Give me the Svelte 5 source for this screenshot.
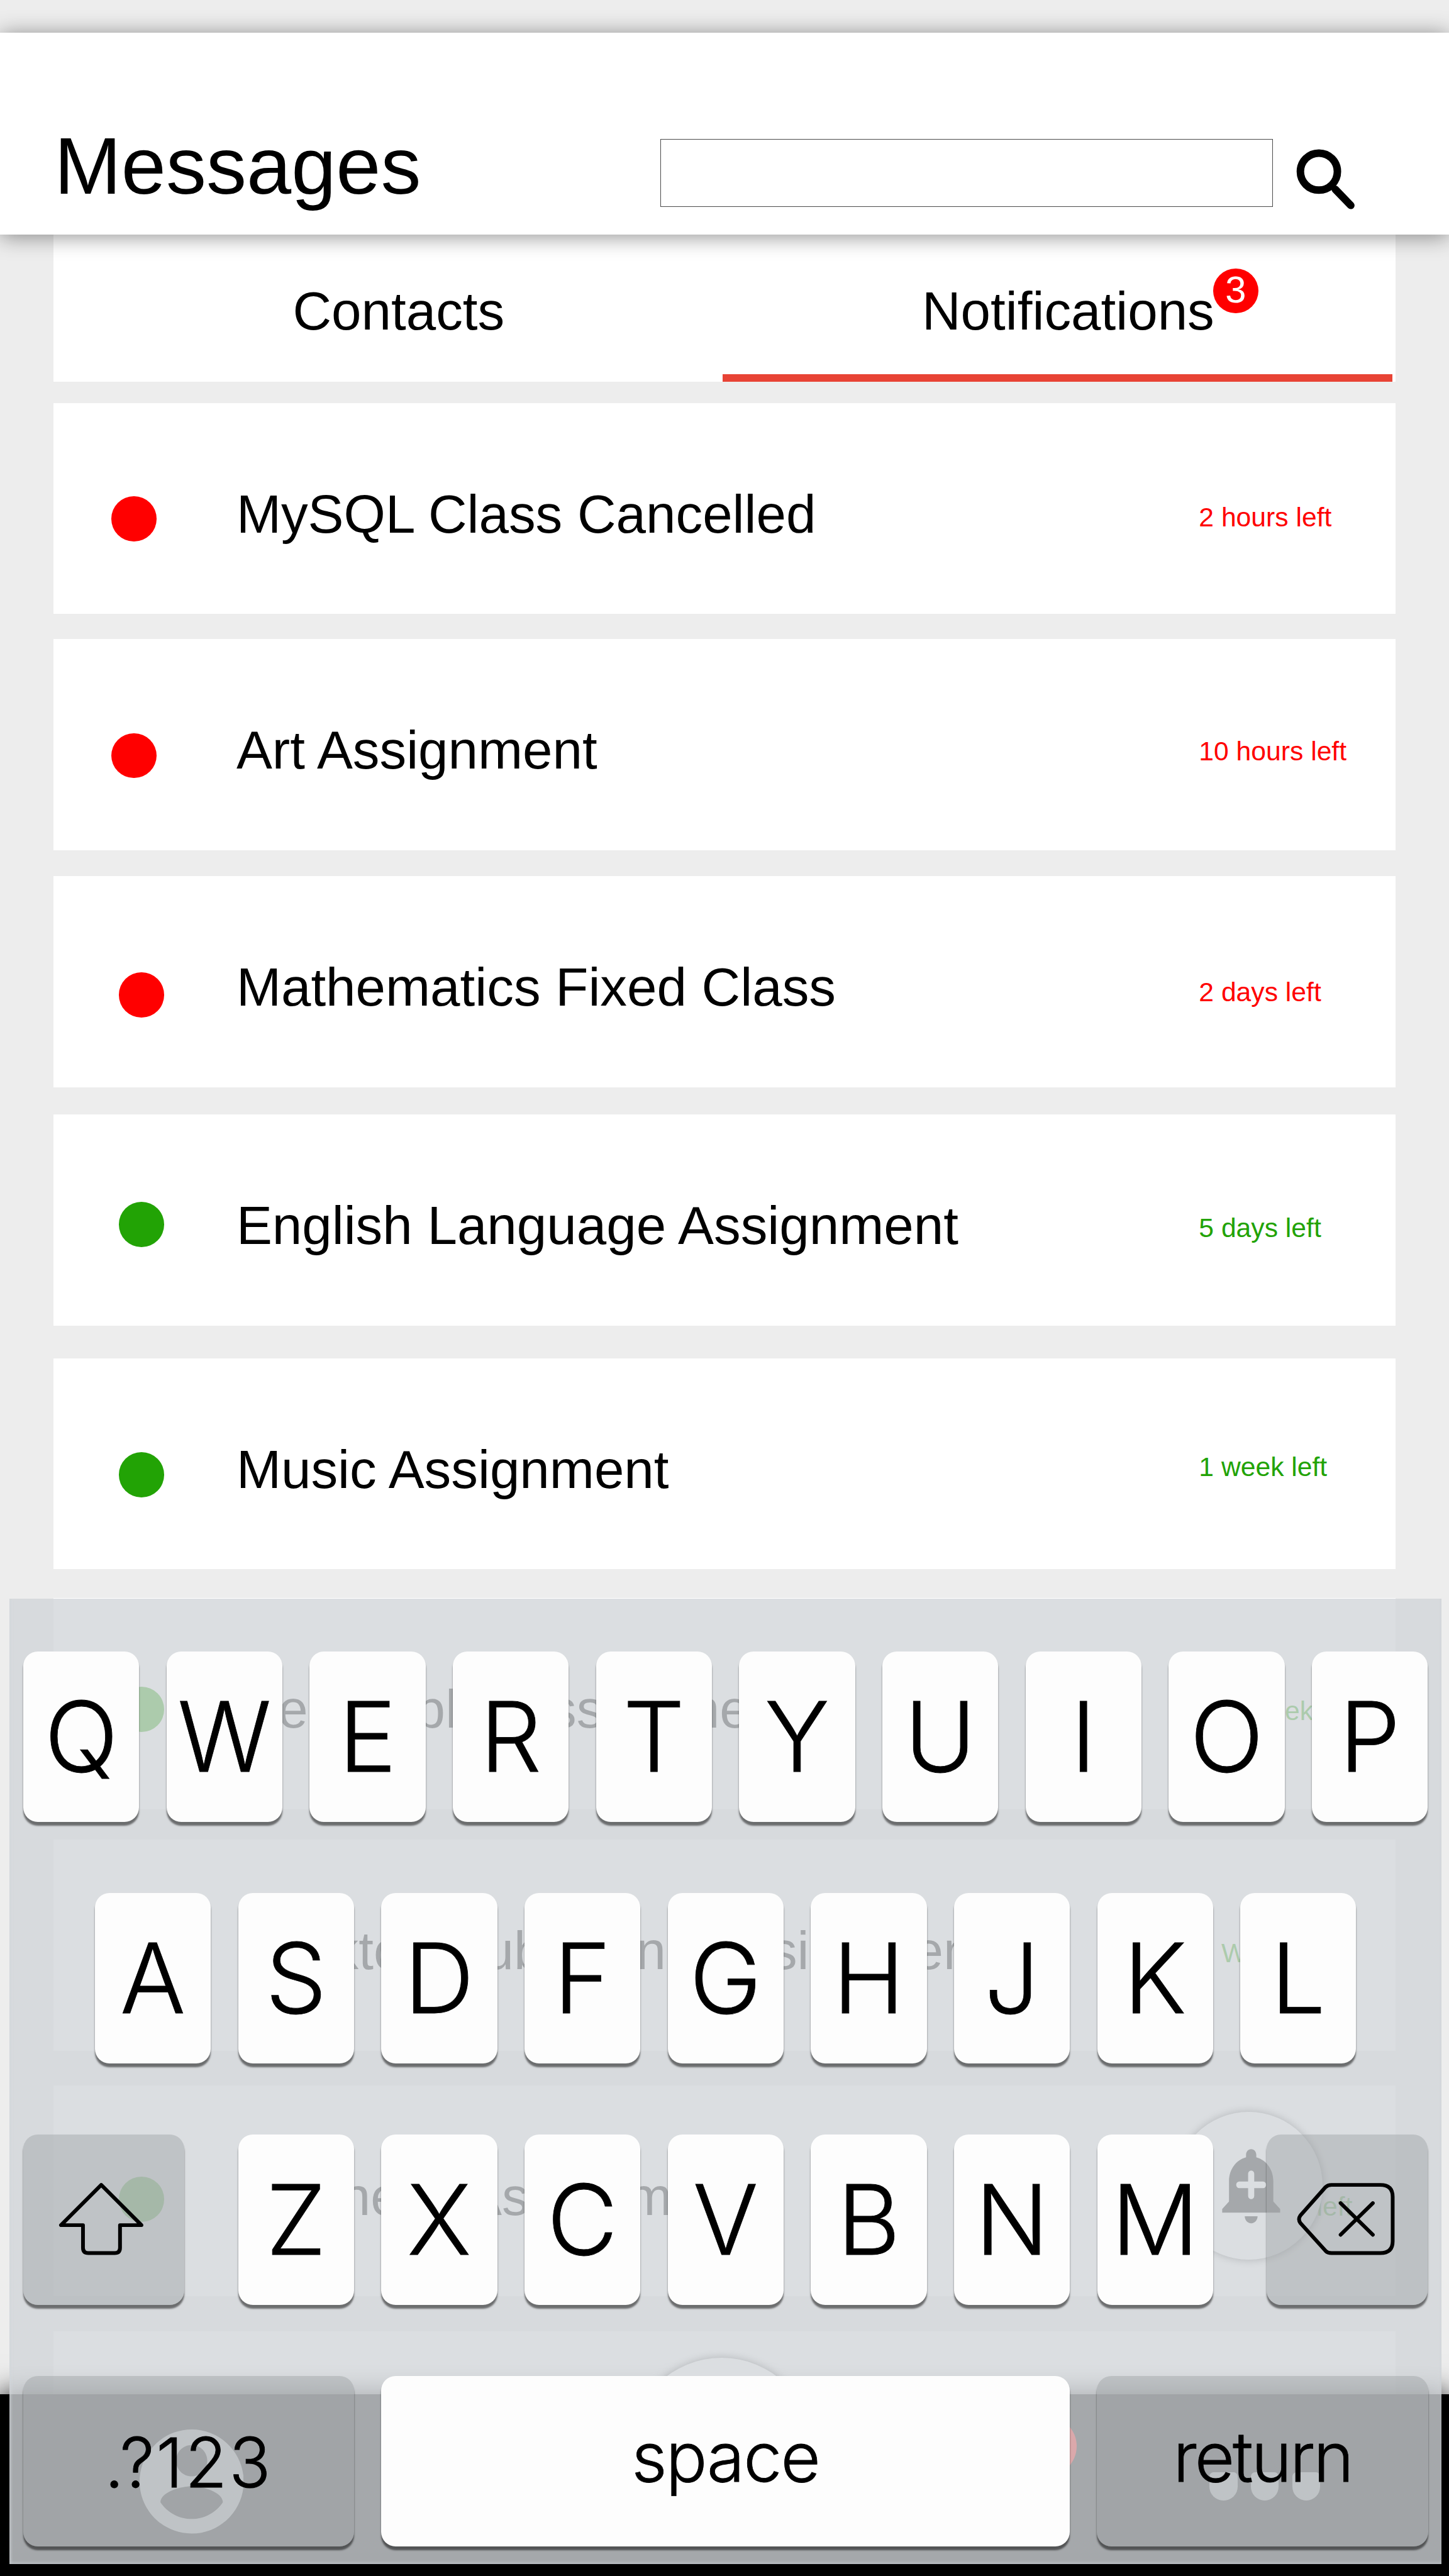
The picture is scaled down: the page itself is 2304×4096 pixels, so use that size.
<script>
  // gap: space above the card; dotX/dotY: offset of the status dot; due: offset of the deadline
  const cards = [
    { title: 'MySQL Class Cancelled', left: '2 hours left', tone: 'red', gap: 0.4, dotX: 1.08, dotY: 1.74, due: 1.88 },
    { title: 'Art Assignment', left: '10 hours left', tone: 'red', gap: 0.47, dotX: 1.08, dotY: 1.75, due: 1.84 },
    { title: 'Mathematics Fixed Class', left: '2 days left', tone: 'red', gap: 0.49, dotX: 1.22, dotY: 1.79, due: 1.9 },
    { title: 'English Language Assignment', left: '5 days left', tone: 'green', gap: 0.51, dotX: 1.22, dotY: 1.63, due: 1.86 },
    { title: 'Music Assignment', left: '1 week left', tone: 'green', gap: 0.61, dotX: 1.22, dotY: 1.75, due: 1.77 },
    { title: 'Geography Assignment', left: '2-3 Weeks', tone: 'green', gap: 0.54, dotX: 1.22, dotY: 1.65, due: 1.85 },
    { title: 'Desktop Publishing Assignment', left: '2 Weeks left', tone: 'green', gap: 0.57, dotX: 1.22, dotY: 1.65, due: 1.86 },
    { title: 'Business Assignment', left: '2 Months left', tone: 'green', gap: 0.65, dotX: 1.22, dotY: 1.7, due: 2.01 },
    { title: '', left: '', tone: 'none', gap: 0.65, dotX: 1.22, dotY: 1.7, due: 1.85 }
  ];
  const row1 = 'QWERTYUIOP'.split('');
  const row2 = 'ASDFGHJKL'.split('');
  const row3 = 'ZXCVBNM'.split('');
</script>

<div class="screen">
  <header>
    <h1>Messages</h1>
    <div class="search"></div>
    <svg class="lens" viewBox="0 0 112 116">
      <circle cx="43.500" cy="42" r="34.500" />
      <path d="M74 75 L103 105" />
    </svg>
  </header>

  <nav class="tabs">
    <div class="tab first">Contacts</div>
    <div class="tab active">
      <span class="label">Notifications<span class="badge">3</span></span>
    </div>
  </nav>

  <main>
    {#each cards as c}
      <article style="--gap:{c.gap}rem; --dx:{c.dotX}rem; --dy:{c.dotY}rem; --due:{c.due}rem">
        <div class="slot"><i class="dot {c.tone}"></i></div>
        <h2>{c.title}</h2>
        <time class={c.tone}>{c.left}</time>
      </article>
    {/each}
  </main>

  <button class="fab" aria-label="Add alert">
    <svg viewBox="0 0 24 24" preserveAspectRatio="none">
      <path d="M10.010 21.010c0 1.100.89 1.990 1.990 1.990s1.990-.89 1.990-1.990h-3.980zM18.880 16.820V11c0-3.250-2.250-5.970-5.290-6.690v-.72C13.590 2.710 12.880 2 12 2s-1.590.71-1.590 1.590v.72C7.370 5.030 5.120 7.750 5.120 11v5.820L3 18.940V20h18v-1.060l-2.120-2.120z" />
      <path class="plus" d="M8.300 12.100h7.400M12 9v6.200" />
    </svg>
  </button>

  <footer>
    <svg class="account" viewBox="2 2 20 20">
      <path d="M12 2C6.480 2 2 6.480 2 12s4.480 10 10 10 10-4.480 10-10S17.520 2 12 2zm0 3c1.660 0 3 1.340 3 3s-1.340 3-3 3-3-1.340-3-3 1.340-3 3-3zm0 14.200c-2.500 0-4.710-1.280-6-3.220.03-1.990 4-3.080 6-3.080 1.990 0 5.970 1.090 6 3.080-1.290 1.940-3.500 3.220-6 3.220z" />
    </svg>
    <div class="home"></div>
    <div class="alert"></div>
    <div class="more"><i></i><i></i><i></i></div>
  </footer>

  <section class="keyboard">
    <div class="row">
      {#each row1 as k}<div class="key">{k}</div>{/each}
    </div>
    <div class="row">
      {#each row2 as k}<div class="key">{k}</div>{/each}
    </div>
    <div class="row spread">
      <div class="key fn wide">
        <svg class="shift" viewBox="0 0 164 140">
          <path d="M82 6 L7 81 H48 V123 Q48 133 58 133 H107 Q117 133 117 123 V81 H157 Z" />
        </svg>
      </div>
      <div class="row">
        {#each row3 as k}<div class="key">{k}</div>{/each}
      </div>
      <div class="key fn wide">
        <svg class="erase" viewBox="0 0 186 140">
          <path d="M67 6 H158 Q181 6 181 28 V111 Q181 133 158 133 H67 Q60 133 56 129 L9 77 Q4 70 9 63 L56 10 Q60 6 67 6 Z" />
          <path d="M84 40 L144 99 M144 40 L84 99" />
        </svg>
      </div>
    </div>
    <div class="row">
      <div class="key fn side num">.?123</div>
      <div class="key space">space</div>
      <div class="key fn side ret">return</div>
    </div>
  </section>
</div>

<style>
  :global(html) {
    font-size: 85.3333px;
  }
  :global(body) {
    background: #ededed;
  }
  .screen {
    position: relative;
    width: 27rem;
    height: 48rem;
    overflow: hidden;
    background: #ededed;
    color: #000;
    font-family: 'Liberation Sans', Arial, sans-serif;
  }
  .screen::before {
    content: '';
    display: table;
  }
  h1,
  h2 {
    margin: 0;
    font-weight: 400;
    line-height: 1;
    white-space: nowrap;
  }
  header {
    position: relative;
    z-index: 1;
    display: flex;
    align-items: flex-start;
    box-sizing: border-box;
    height: 3.76rem;
    margin-top: 0.61rem;
    padding-left: 1.01rem;
    background: #fff;
    box-shadow: 0 0.03rem 0.38rem rgba(0, 0, 0, 0.44);
  }
  h1 {
    width: 11.29rem;
    padding-top: 1.73rem;
    font-size: 1.5rem;
  }
  .search {
    box-sizing: border-box;
    width: 11.42rem;
    height: 1.26rem;
    margin-top: 1.98rem;
    border: 1px solid #4a4a4a;
  }
  .lens {
    width: 1.12rem;
    height: 1.16rem;
    margin: 2.17rem 0 0 0.42rem;
    fill: none;
    stroke: #000;
    stroke-width: 14;
    stroke-linecap: round;
  }
  .tabs {
    display: flex;
    width: 25rem;
    height: 2.74rem;
    margin-left: 1rem;
    background: #fff;
  }
  .tab {
    box-sizing: border-box;
    width: 12.47rem;
    padding-top: 0.93rem;
    font-size: 1rem;
    line-height: 1;
  }
  .first {
    padding-left: 4.455rem;
  }
  .active {
    padding-left: 3.71rem;
    border-bottom: 0.15rem solid #e84335;
  }
  .label {
    position: relative;
  }
  .badge {
    position: absolute;
    top: -0.24rem;
    right: -0.82rem;
    width: 0.84rem;
    height: 0.84rem;
    border-radius: 50%;
    background: #f00;
    color: #fff;
    font-size: 0.7rem;
    line-height: 0.8rem;
    text-align: center;
  }
  main {
    width: 25rem;
    margin-left: 1rem;
  }
  article {
    display: flex;
    align-items: flex-start;
    height: 3.93rem;
    margin-top: var(--gap);
    background: #fff;
  }
  .slot {
    width: 3.405rem;
  }
  .dot {
    display: block;
    width: 0.84rem;
    height: 0.84rem;
    margin: var(--dy) 0 0 var(--dx);
    border-radius: 50%;
  }
  .dot.red {
    background: #f00;
  }
  .dot.green {
    background: #22a305;
  }
  article h2 {
    width: 17.935rem;
    padding-top: 1.57rem;
    font-size: 1rem;
  }
  time {
    padding-top: var(--due);
    font-size: 0.5rem;
    line-height: 1;
    white-space: nowrap;
  }
  time.red {
    color: #f00;
  }
  time.green {
    color: #22a305;
  }
  .fab {
    position: absolute;
    left: 21.89rem;
    top: 39.35rem;
    width: 2.76rem;
    height: 2.76rem;
    padding: 0;
    border: 0;
    border-radius: 50%;
    background: #fff;
    box-shadow: 0 0 0.16rem rgba(0, 0, 0, 0.75);
  }
  .fab svg {
    display: block;
    width: 1.44rem;
    height: 1.58rem;
    margin: -0.06rem 0 0 0.7rem;
  }
  .plus {
    fill: none;
    stroke: #fff;
    stroke-width: 1.9;
    stroke-linecap: round;
  }
  footer {
    position: absolute;
    left: 0;
    bottom: 0;
    width: 27rem;
    height: 3.39rem;
    background: #000;
    box-shadow: 0 0 0.5rem #000;
  }
  .account {
    position: absolute;
    left: 2.6rem;
    top: 0.66rem;
    width: 1.94rem;
    height: 1.94rem;
    fill: #fff;
  }
  .home {
    position: absolute;
    left: 11.77rem;
    top: -0.68rem;
    width: 3.36rem;
    height: 3.36rem;
    border-radius: 50%;
    background: #fff;
    box-shadow: 0 0 0.16rem rgba(0, 0, 0, 0.75);
  }
  .alert {
    position: absolute;
    left: 18.94rem;
    top: 0.41rem;
    width: 1.12rem;
    height: 1.12rem;
    border-radius: 50%;
    background: #f00;
  }
  .more {
    position: absolute;
    left: 22.54rem;
    top: 1.46rem;
    display: flex;
    gap: 0.25rem;
  }
  .more i {
    width: 0.52rem;
    height: 0.52rem;
    border-radius: 15% 15% 50% 50%;
    background: #fff;
  }
  .keyboard {
    position: absolute;
    left: 0.18rem;
    top: 29.785rem;
    z-index: 2;
    display: flex;
    flex-direction: column;
    gap: 1.33rem;
    box-sizing: border-box;
    width: 26.68rem;
    height: 17.99rem;
    padding: 0.99rem 0.255rem 0;
    background: rgba(209, 213, 217, 0.79);
    box-shadow: inset 0 -0.05rem 0.05rem -0.01rem rgba(190, 196, 204, 0.6), inset 0.05rem 0 0.05rem -0.02rem rgba(220, 224, 228, 0.5);
    font-family: Inter, 'Liberation Sans', sans-serif;
    font-weight: 300;
  }
  .row {
    display: flex;
    justify-content: center;
    gap: 0.508rem;
  }
  .spread {
    justify-content: space-between;
  }
  .key {
    box-sizing: border-box;
    flex: none;
    width: 2.16rem;
    height: 3.17rem;
    padding-top: 0.68rem;
    border-radius: 0.27rem;
    background: #fdfdfd;
    box-shadow: 0 0.07rem 0.03rem rgba(0, 0, 0, 0.5);
    font-size: 1.81rem;
    line-height: 1;
    text-align: center;
    white-space: nowrap;
    -webkit-text-stroke: 0.01rem #000;
  }
  .fn {
    background: rgba(156, 160, 163, 0.43);
  }
  .wide {
    width: 3rem;
    padding-top: 0.88rem;
  }
  .side {
    width: 6.165rem;
  }
  .space {
    width: 12.83rem;
  }
  .num,
  .space,
  .ret {
    font-size: 1.28rem;
  }
  .num {
    padding-top: 0.97rem;
    letter-spacing: 0.035rem;
  }
  .space,
  .ret {
    padding-top: 0.865rem;
    letter-spacing: -0.02rem;
  }
  .ret {
    letter-spacing: -0.035rem;
  }
  .shift,
  .erase {
    display: block;
    height: 1.4rem;
    fill: none;
    stroke: #000;
    stroke-width: 7;
    stroke-linejoin: round;
    stroke-linecap: round;
  }
  .shift {
    width: 1.64rem;
    margin-left: 0.63rem;
  }
  .erase {
    width: 1.86rem;
    margin-left: 0.54rem;
  }
</style>
